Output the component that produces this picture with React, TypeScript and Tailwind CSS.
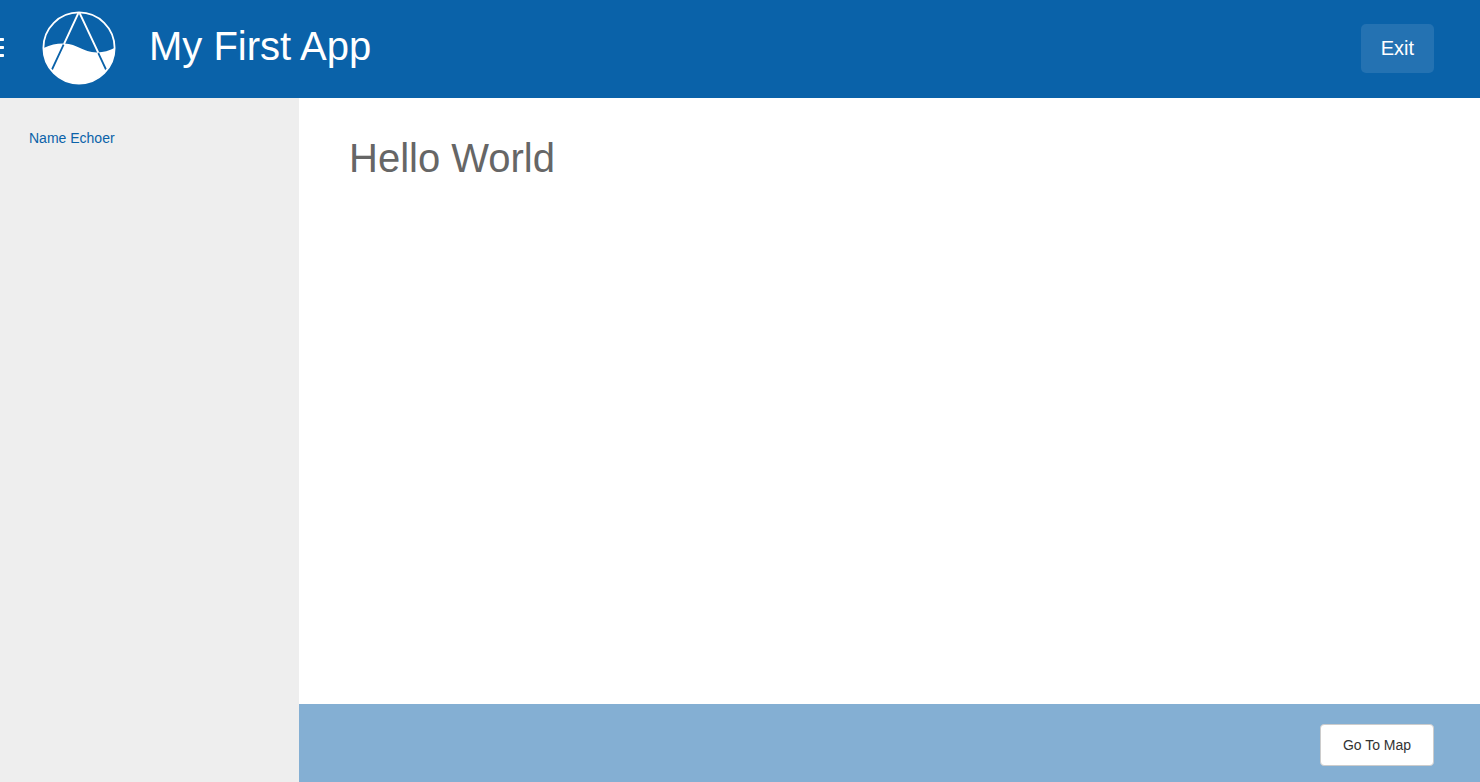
function MenuIcon() {
  return (
    <svg viewBox="0 0 4 19" className="h-[19px] w-1" fill="#fff" aria-hidden="true">
      <path d="M0 0H3.2Q4 0 4 .8V2.2Q4 3 3.2 3H0ZM0 8H3.2Q4 8 4 8.8V10.2Q4 11 3.2 11H0ZM0 16H3.2Q4 16 4 16.8V18.2Q4 19 3.2 19H0Z" />
    </svg>
  );
}

function Logo() {
  return (
    <svg viewBox="0 0 74 74" className="size-[74px]" fill="none" aria-hidden="true">
      <path d="M36.4 2 22 33M37.6 2 56.2 41.5" stroke="#fff" strokeWidth="1.8" />
      <path
        d="M1.5 37C9 33.8 15 32.4 22 32.6C36 33 40 41.4 55 41.4C62 41.4 67 39.8 72.5 37A35.5 35.5 0 0 1 1.5 37Z"
        fill="#fff"
      />
      <path d="M21.6 33.6 10 58.5M56.3 42.2 64 58.5" stroke="#0a62a9" strokeWidth="1.8" />
      <circle cx="37" cy="37" r="35.6" stroke="#fff" strokeWidth="1.8" />
    </svg>
  );
}

export default function App() {
  return (
    <div className="flex min-h-screen flex-col bg-white font-['Liberation_Sans',Arial,sans-serif]">
      <header className="flex h-[98px] items-center bg-[#0a62a9] pr-[46px] pb-[2px] text-white">
        <button type="button" aria-label="Toggle menu" className="mr-[38px] pb-[2px]">
          <MenuIcon />
        </button>
        <Logo />
        <h1 className="ml-[33px] pb-1 text-[40px] leading-[48px]">My First App</h1>
        <button
          type="button"
          className="ml-auto h-[49px] rounded-[5px] bg-[#2472b2] px-5 text-[20px] leading-6"
        >
          Exit
        </button>
      </header>
      <div className="flex grow">
        <nav className="w-[299px] shrink-0 bg-[#eeeeee] px-[29px] py-[30px]">
          <a href="#name-echoer" className="block text-sm text-[#0a62a9]">
            Name Echoer
          </a>
        </nav>
        <div className="flex min-w-0 grow flex-col">
          <main className="grow px-[50px] pt-9">
            <h2 className="text-[40px] leading-[48px] text-[#666666]">Hello World</h2>
          </main>
          <footer className="flex justify-end bg-[#84afd3] pt-5 pr-[46px] pb-4">
            <button
              type="button"
              className="h-[42px] min-w-[114px] rounded-[4px] border border-[#cccccc] bg-white px-5 text-sm text-[#333333]"
            >
              Go To Map
            </button>
          </footer>
        </div>
      </div>
    </div>
  );
}
